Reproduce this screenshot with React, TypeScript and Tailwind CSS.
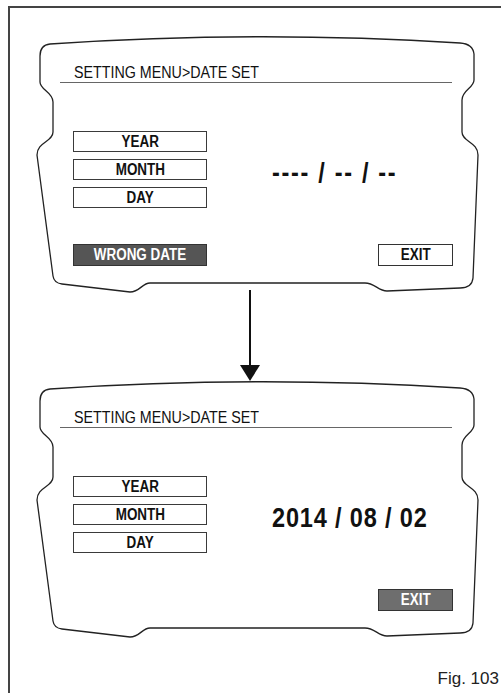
const sans = "font-['Liberation_Sans',Arial,sans-serif]";

const outline =
  "M14 10 Q220 -4 424 9 Q437 10 438 20 L438 46 C438 54 426 56 426 66 L426 98 C426 108 442 108 442 121 L437 244 Q436 254 424 254 L351 257 C342 257 339 249 329 249 L114 249 C106 249 104 258 94 258 L26 250 Q18 249 17 242 L1 121 C1 108 17 108 17 98 L17 68 C17 58 4 56 4 48 L4 22 Q4 11 14 10 Z";

// the manual uses a condensed face; squeeze Liberation Sans to its widths
const Cond = ({ children, left }: { children: React.ReactNode; left?: boolean }) => (
  <span
    className={`inline-block whitespace-nowrap scale-x-[0.84] ${
      left ? "origin-left" : "origin-center"
    }`}
  >
    {children}
  </span>
);

type PanelProps = {
  date: string;
  wrong?: boolean;
  exitActive?: boolean;
};

const Field = ({ label }: { label: string }) => (
  <div className="flex h-[21px] w-[134px] items-center justify-center border border-[#3a3a3a] text-[16px] font-bold leading-none text-[#111]">
    <Cond>{label}</Cond>
  </div>
);

const Panel = ({ date, wrong, exitActive }: PanelProps) => {
  return (
    <div className={`relative ml-[26px] h-[262px] w-[446px] ${sans}`}>
      <svg
        className="absolute inset-0 overflow-visible"
        width="446"
        height="262"
        viewBox="0 0 446 262"
      >
        <path d={outline} fill="none" stroke="#222" strokeWidth="1.3" />
      </svg>
      <div className="relative pl-[24px] pt-[29px]">
        <div className="h-[20px] w-[392px] border-b border-[#666] pl-[14px] text-[17px] leading-[19px] text-[#111]">
          <Cond left>SETTING MENU&gt;DATE SET</Cond>
        </div>
        <div className="mt-[48px] flex items-center pl-[13px]">
          <div className="flex flex-col gap-[7px]">
            <Field label="YEAR" />
            <Field label="MONTH" />
            <Field label="DAY" />
          </div>
          <div
            className={`ml-[65px] pt-[6px] text-[28px] font-bold leading-none text-[#111] ${
              wrong ? "tracking-[2px]" : "tracking-[1px]"
            }`}
          >
            <Cond left>{date}</Cond>
          </div>
        </div>
        <div className="mt-[36px] flex items-center pl-[13px]">
          {wrong ? (
            <div className="flex h-[22px] w-[134px] items-center justify-center border border-[#333] bg-[#555] text-[16px] font-bold leading-none text-white">
              <Cond>WRONG DATE</Cond>
            </div>
          ) : (
            <div className="h-[22px] w-[134px]" />
          )}
          <div
            className={`ml-[171px] flex h-[22px] w-[75px] items-center justify-center border border-[#333] text-[16px] font-bold leading-none ${
              exitActive ? "bg-[#6e6e6e] text-white" : "bg-white text-[#111]"
            }`}
          >
            <Cond>EXIT</Cond>
          </div>
        </div>
      </div>
    </div>
  );
};

export default function App() {
  return (
    <div className="h-[693px] overflow-hidden bg-white pl-2 pt-[6px]">
      <div className="h-[700px] w-[600px] border-l-2 border-t-2 border-[#444] pt-[26px]">
        <Panel date="---- / -- / --" wrong />
        <div className="ml-[230px] h-[83px] w-[20px]">
          <svg className="overflow-visible" width="20" height="83" viewBox="0 0 20 83">
            <line x1="10" y1="-6" x2="10" y2="72" stroke="#111" strokeWidth="2" />
            <polygon points="0,69 20,69 10,85" fill="#111" />
          </svg>
        </div>
        <Panel date="2014 / 08 / 02" exitActive />
        <div className={`mt-[28px] w-[489px] text-right text-[17px] leading-[20px] text-[#222] ${sans}`}>
          Fig. 103
        </div>
      </div>
    </div>
  );
}
